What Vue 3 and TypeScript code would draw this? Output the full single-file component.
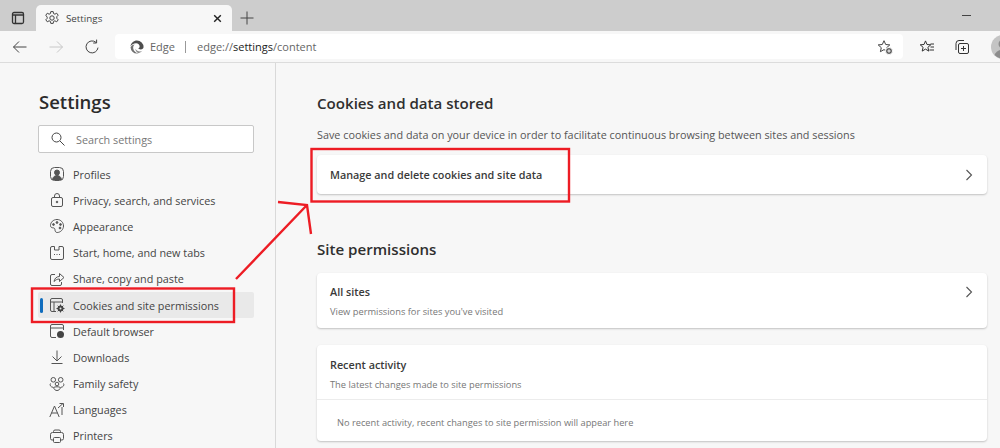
<script setup lang="ts">
interface NavItem {
  label: string
  icon: string
  active?: boolean
}

const navItems: NavItem[] = [
  { label: 'Profiles', icon: 'profile' },
  { label: 'Privacy, search, and services', icon: 'lock' },
  { label: 'Appearance', icon: 'palette' },
  { label: 'Start, home, and new tabs', icon: 'home' },
  { label: 'Share, copy and paste', icon: 'share' },
  { label: 'Cookies and site permissions', icon: 'cookies', active: true },
  { label: 'Default browser', icon: 'browser' },
  { label: 'Downloads', icon: 'download' },
  { label: 'Family safety', icon: 'family' },
  { label: 'Languages', icon: 'lang' },
  { label: 'Printers', icon: 'printer' },
]
</script>

<template>
  <div class="window">
    <!-- tab strip -->
    <div class="tabstrip">
      <div class="tab-actions">
        <svg class="ico tab-panel" width="16" height="16" viewBox="0 0 16 16">
          <rect x="2.500" y="2.500" width="11" height="11" rx="1.500" />
          <path d="M2.500 5h11M5.500 5v8.500" />
        </svg>
      </div>
      <div class="tab">
        <svg class="ico" width="16" height="16" viewBox="0 0 16 16">
          <path d="M6.800 1.600h2.400l.4 2 1.300.6 1.800-1 1.500 2-1.400 1.500v1.600l1.400 1.500-1.500 2-1.800-1-1.300.6-.4 2H6.800l-.4-2-1.300-.6-1.800 1-1.500-2 1.400-1.500V7.200L1.800 5.200l1.500-2 1.800 1 1.300-.6z" />
          <circle cx="8" cy="8" r="2.200" />
        </svg>
        <span class="tab-title">Settings</span>
        <svg class="tab-close" width="11" height="11" viewBox="0 0 10 10">
          <path d="M2 2l6 6M8 2l-6 6" />
        </svg>
      </div>
      <svg class="ico new-tab" width="16" height="16" viewBox="0 0 16 16">
        <path d="M8 1.500v13M1.500 8h13" />
      </svg>
      <div class="minimize"></div>
    </div>

    <!-- toolbar -->
    <div class="toolbar">
      <svg class="ico nav-btn back" width="16" height="16" viewBox="0 0 16 16">
        <path d="M14.500 8H1.500M7 2.500L1.500 8 7 13.500" />
      </svg>
      <svg class="ico nav-btn forward" width="16" height="16" viewBox="0 0 16 16">
        <path d="M1.500 8h13M9 2.500L14.500 8 9 13.500" />
      </svg>
      <svg class="ico nav-btn reload" width="16" height="16" viewBox="0 0 16 16">
        <path d="M14 8.600A6 6 0 1 1 12 3.400M12.600 0.600v3.400H9.200" />
      </svg>
      <div class="address">
        <svg class="edge-logo" width="14" height="14" viewBox="0 0 16 16">
          <path fill="#4d4d4d" d="M8 .5a7.500 7.500 0 0 1 7.500 7.600c0 1.800-1.500 2.700-3.200 2.700-1.500 0-2.600-.5-3-1 .9-.2 1.700-1 1.700-2.300C11 5.400 9.400 3.800 7 3.800 4 3.800 1.600 5.700.6 7 1.100 3.300 4.200.5 8 .5z" />
          <path fill="#6f6f6f" d="M.6 8.300C1.300 6.300 3.600 5 5.500 5c-1.600 1-2.100 2.800-1.800 4.800.4 2.700 2.600 5 5.600 5.400-.5.200-.9.300-1.400.3A7.500 7.500 0 0 1 .6 8.300z" />
          <path fill="#8a8a8a" d="M9.500 15c-2-1-3.500-3-3.300-5 .8 1.900 3.100 3 5.300 3 1 0 1.900-.2 2.700-.7A7.500 7.500 0 0 1 9.500 15z" />
        </svg>
        <span class="addr-edge">Edge</span>
        <span class="addr-sep"></span>
        <span class="addr-url">edge://<b>settings</b>/content</span>
        <svg class="ico addr-star" width="16" height="16" viewBox="0 0 16 16">
          <path d="M7 1.700l1.700 3.800 4.100.4-3.100 2.800.9 4-3.600-2.100-3.600 2.100.9-4-3.100-2.800 4.100-.4z" />
          <circle class="plus-dot" cx="12" cy="12" r="3.500" />
          <path class="plus-mark" d="M12 10.300v3.400M10.300 12h3.400" />
        </svg>
      </div>
      <svg class="ico tool-btn fav" width="16" height="16" viewBox="0 0 16 16">
        <path d="M6.500 1.900l1.500 3.600 3.800.3-2.900 2.500.9 3.800-3.300-2-3.300 2 .9-3.800L1.200 5.800 5 5.500z" />
        <path d="M11.500 5h3.500M11.500 8h3.500M10.500 11h4.500" />
      </svg>
      <svg class="ico tool-btn coll" width="16" height="16" viewBox="0 0 16 16">
        <rect x="4.500" y="4.500" width="10" height="10" rx="1.500" />
        <path d="M9.500 7v5M7 9.500h5M2 11V4.500A3 3 0 0 1 5 1.500h5" />
      </svg>
      <div class="avatar">
        <svg width="24" height="24" viewBox="0 0 24 24">
          <circle cx="12" cy="12" r="12" fill="#c4c4c4" />
          <circle cx="12" cy="9" r="4.500" fill="#8c8c8c" />
          <path d="M3.500 20c1.500-4 5-5.500 8.500-5.500s7 1.500 8.500 5.500a12 12 0 0 1-17 0z" fill="#8c8c8c" />
        </svg>
      </div>
    </div>

    <div class="body">
      <!-- settings sidebar -->
      <aside class="sidebar">
        <h1 class="side-title">Settings</h1>
        <div class="search">
          <svg class="ico" width="14" height="14" viewBox="0 0 14 14">
            <circle cx="5.500" cy="5.500" r="4.500" />
            <path d="M9 9l4.500 4.500" />
          </svg>
          <span>Search settings</span>
        </div>
        <nav class="nav">
          <div v-for="item in navItems" :key="item.label" class="nav-row" :class="{ active: item.active }">
            <svg class="ico nav-icon" width="16" height="16" viewBox="0 0 16 16">
              <template v-if="item.icon === 'profile'">
                <rect x="1.500" y="1.500" width="13" height="13" rx="4" />
                <circle cx="8" cy="6.500" r="2.500" fill="#555" />
                <path d="M3.500 13.500c.5-2.800 2.500-4 4.500-4s4 1.200 4.500 4z" fill="#555" />
              </template>
              <template v-else-if="item.icon === 'lock'">
                <rect x="2.500" y="5.500" width="11" height="9" rx="1.500" />
                <path d="M5.500 5.500V4a2.500 2.500 0 0 1 5 0v1.500" />
                <circle cx="8" cy="10" r=".8" fill="#555" />
              </template>
              <template v-else-if="item.icon === 'palette'">
                <path d="M8 1.500c-3.800 0-6.500 2.800-6.500 6 0 1.500 1 2.300 2.200 2.300 1.500 0 2.300.7 2.300 2 0 1.500.7 2.700 2.200 2.700 3.300 0 6.300-3 6.300-6.500S11.800 1.500 8 1.500z" />
                <circle cx="4.500" cy="6.500" r=".9" fill="#555" />
                <circle cx="8" cy="4.500" r=".9" fill="#555" />
                <circle cx="11.500" cy="6.500" r=".9" fill="#555" />
                <circle cx="11" cy="10" r=".9" fill="#555" />
              </template>
              <template v-else-if="item.icon === 'home'">
                <path d="M5.500 1.500H3A1.500 1.500 0 0 0 1.500 3v10A1.500 1.500 0 0 0 3 14.500h10a1.500 1.500 0 0 0 1.500-1.500V3A1.500 1.500 0 0 0 13 1.500h-3v3.500H5.500z" />
                <path d="M5 9.500h1M7.500 9.500h1M10 9.500h1" />
              </template>
              <template v-else-if="item.icon === 'share'">
                <path d="M6 3.500H3A1.500 1.500 0 0 0 1.500 5v8A1.500 1.500 0 0 0 3 14.500h8a1.500 1.500 0 0 0 1.500-1.500v-2" />
                <path d="M5 10.500c.5-3 2.500-5 5.500-5V2.500l4.500 4-4.500 4V8C8 8 6.500 9 5 10.500z" />
              </template>
              <template v-else-if="item.icon === 'cookies'">
                <path d="M7 14.500H3A1.500 1.500 0 0 1 1.500 13V3A1.500 1.500 0 0 1 3 1.500h9A1.500 1.500 0 0 1 13.500 3v3M1.500 5h12M5 5v9.500" />
                <circle cx="11.500" cy="11.500" r="3" fill="#444" stroke="none" />
                <path d="M11.500 7.500v8M7.500 11.500h8M8.700 8.700l5.600 5.600M14.300 8.700l-5.600 5.600" stroke="#444" />
                <circle cx="11.500" cy="11.500" r="1" fill="#e9e9e9" stroke="none" />
              </template>
              <template v-else-if="item.icon === 'browser'">
                <path d="M7 14.500H3A1.500 1.500 0 0 1 1.500 13V3A1.500 1.500 0 0 1 3 1.500h10A1.500 1.500 0 0 1 14.500 3v4M1.500 5h13" />
                <circle cx="11.500" cy="11.500" r="3.500" fill="#444" stroke="none" />
              </template>
              <template v-else-if="item.icon === 'download'">
                <path d="M8 1.500v10M3.500 7.500L8 12l4.500-4.500M2.500 14.500h11" />
              </template>
              <template v-else-if="item.icon === 'family'">
                <circle cx="4.300" cy="3.800" r="2.300" />
                <circle cx="11.700" cy="3.800" r="2.300" />
                <circle cx="8" cy="8" r="1.800" />
                <path d="M1.500 7.500c-1 1.500 0 3.500 2.500 3.800M14.500 7.500c1 1.500 0 3.500-2.500 3.800M4.500 11.500c.5 2 2 3 3.500 3s3-1 3.500-3c-2-1-5-1-7 0z" />
              </template>
              <template v-else-if="item.icon === 'lang'">
                <path d="M.8 15L5.500 4l4.700 11M2.500 11h6M9 6l5-4.500M10.500 1.500H14.500V5M13 5v8" />
              </template>
              <template v-else>
                <path d="M4.500 4.500V3.500A1.500 1.500 0 0 1 6 2h4a1.500 1.500 0 0 1 1.500 1.500v1M4 12H3a1.500 1.500 0 0 1-1.500-1.500V6.500A2 2 0 0 1 3.500 4.500h9a2 2 0 0 1 2 2v4A1.500 1.500 0 0 1 13 12h-1" />
                <rect x="4.500" y="9.500" width="7" height="5" rx="1" />
              </template>
            </svg>
            <span>{{ item.label }}</span>
          </div>
        </nav>
      </aside>

      <!-- content -->
      <main class="content">
        <h2 class="section-title">Cookies and data stored</h2>
        <p class="section-desc">Save cookies and data on your device in order to facilitate continuous browsing between sites and sessions</p>
        <div class="card link-card">
          <span class="card-strong">Manage and delete cookies and site data</span>
          <svg class="chevron" width="8" height="12" viewBox="0 0 8 12"><path d="M1.500 1l5 5-5 5" /></svg>
        </div>

        <h2 class="section-title second">Site permissions</h2>
        <div class="card sites-card">
          <div class="sites-text">
            <div class="card-strong">All sites</div>
            <div class="card-sub">View permissions for sites you've visited</div>
          </div>
          <svg class="chevron up" width="8" height="12" viewBox="0 0 8 12"><path d="M1.500 1l5 5-5 5" /></svg>
        </div>
        <div class="card recent-card">
          <div class="recent-head">
            <div class="card-strong">Recent activity</div>
            <div class="card-sub">The latest changes made to site permissions</div>
          </div>
          <div class="recent-empty">No recent activity, recent changes to site permission will appear here</div>
        </div>
      </main>
    </div>

    <!-- red annotations drawn on top of the screenshot -->
    <svg class="annotations" width="1000" height="448" viewBox="0 0 1000 448">
      <rect x="32" y="288.500" width="202" height="33.500" />
      <rect x="311.500" y="149" width="257.500" height="52.500" />
      <path d="M236 279L307 205M278 202L307 205L311 234" />
    </svg>
  </div>
</template>

<style>
html, body {
  margin: 0;
  overflow: hidden;
}
</style>

<style scoped>
.window {
  position: relative;
  width: 1000px;
  height: 448px;
  overflow: hidden;
  background: #f7f7f7;
  font-family: "Open Sans", "Noto Sans", sans-serif;
  color: #333;
}

.ico {
  fill: none;
  stroke: #444;
  stroke-width: 1;
  flex: none;
}

/* tab strip */
.tabstrip {
  height: 31px;
  background: #cdcdcd;
  display: flex;
  align-items: flex-end;
  box-sizing: border-box;
}

.tab-actions {
  width: 36px;
  height: 26px;
  display: flex;
  align-items: center;
  justify-content: center;
}

.tab-panel {
  stroke: #333;
  stroke-width: 1.300;
}

.tab {
  width: 196px;
  height: 26px;
  background: #f7f7f7;
  border-radius: 5px 5px 0 0;
  display: flex;
  align-items: center;
  padding: 0 9px 0 8px;
  box-sizing: border-box;
  gap: 6px;
}

.tab-title {
  font-size: 9.800px;
  color: #444;
  flex: 1;
}

.tab-close {
  fill: none;
  stroke: #222;
  stroke-width: 1.300;
}

.new-tab {
  margin: 0 0 5px 7px;
}

.minimize {
  width: 9px;
  height: 1px;
  background: #444;
  margin: 0 29px 15px auto;
}

/* toolbar */
.toolbar {
  height: 32px;
  background: #f7f7f7;
  border-bottom: 1px solid #dcdcdc;
  box-sizing: border-box;
  display: flex;
  align-items: center;
  position: relative;
}

.back {
  margin-left: 12px;
}

.forward {
  margin-left: 20px;
  stroke: #c8c8c8;
}

.reload {
  margin-left: 20px;
  margin-right: 15px;
}

.address {
  width: 788px;
  height: 25px;
  flex: none;
  background: #fff;
  border-radius: 4px;
  display: flex;
  align-items: center;
  padding: 0 10px 0 15px;
  box-sizing: border-box;
  font-size: 11px;
  color: #666;
}

.edge-logo {
  margin-right: 6px;
}

.addr-sep {
  width: 1px;
  height: 12px;
  background: #999;
  margin: 0 11px 0 10px;
}

.addr-url b {
  font-weight: 400;
  color: #222;
}

.addr-star {
  margin-left: auto;
}

.plus-dot {
  fill: #555;
  stroke: #fff;
}

.plus-mark {
  stroke: #fff;
}

.fav {
  margin-left: 16px;
  stroke: #333;
}

.coll {
  margin-left: 19px;
  stroke: #333;
}

.avatar {
  margin-left: 21px;
  height: 24px;
  flex: none;
}

/* page */
.body {
  display: flex;
  height: 385px;
}

.sidebar {
  width: 276px;
  flex: none;
  box-sizing: border-box;
  border-right: 1px solid #d9d9d9;
  padding: 25px 21px 0 38px;
}

.side-title {
  margin: 0 0 10px 1px;
  font-size: 18.500px;
  line-height: 27px;
  font-weight: 600;
  color: #2b2b2b;
}

.search {
  height: 28px;
  background: #fff;
  border: 1px solid #c8c8c8;
  border-radius: 2px;
  box-sizing: border-box;
  display: flex;
  align-items: center;
  padding-left: 12px;
  gap: 11px;
  font-size: 10.800px;
  color: #777;
}

.nav {
  margin-top: 8px;
}

.nav-row {
  position: relative;
  height: 26.200px;
  display: flex;
  align-items: center;
  padding-left: 11px;
  gap: 8px;
  font-size: 10.800px;
  color: #444;
}

.nav-icon {
  stroke: #555;
}

.nav-row.active {
  background: #e9e9e9;
  border-radius: 2px;
}

.nav-row.active::before {
  content: "";
  position: absolute;
  left: 2px;
  top: 6px;
  bottom: 5px;
  width: 2.500px;
  border-radius: 2px;
  background: #0f6cbd;
}

.content {
  flex: 1;
  min-width: 0;
  padding: 28px 13px 0 41px;
}

.section-title {
  margin: 0;
  font-size: 15.100px;
  line-height: 24px;
  font-weight: 600;
  color: #2f2f2f;
}

.section-title.second {
  margin-top: 43px;
}

.section-desc {
  margin: 12px 0 0;
  font-size: 10.820px;
  line-height: 16px;
  color: #555;
  white-space: nowrap;
}

.card {
  background: #fff;
  border-radius: 4px;
  box-shadow: 0 1px 2px rgba(0, 0, 0, 0.22);
  box-sizing: border-box;
}

.link-card {
  height: 39px;
  margin-top: 12px;
  padding: 0 14px 0 13px;
  display: flex;
  align-items: center;
  justify-content: space-between;
}

.card-strong {
  font-size: 10.800px;
  font-weight: 600;
  color: #3a3a3a;
}

.card-sub {
  font-size: 9.300px;
  color: #777;
  margin-top: 6px;
}

.chevron {
  fill: none;
  stroke: #555;
  stroke-width: 1.100;
}

.chevron.up {
  align-self: flex-start;
  margin-top: 13px;
}

.sites-card {
  height: 55px;
  margin-top: 12px;
  padding: 0 14px 0 13px;
  display: flex;
  align-items: center;
  justify-content: space-between;
}

.sites-text {
  padding-top: 1px;
}

.recent-card {
  height: 96px;
  margin-top: 17px;
}

.recent-head {
  height: 55px;
  padding: 12px 13px 0;
  box-sizing: border-box;
  border-bottom: 1px solid #ececec;
}

.recent-empty {
  padding: 16px 20px 0;
  font-size: 9.250px;
  color: #777;
}

/* annotations */
.annotations {
  position: absolute;
  left: 0;
  top: 0;
  pointer-events: none;
  fill: none;
  stroke: #ed1c24;
  stroke-width: 2.400;
}
</style>
